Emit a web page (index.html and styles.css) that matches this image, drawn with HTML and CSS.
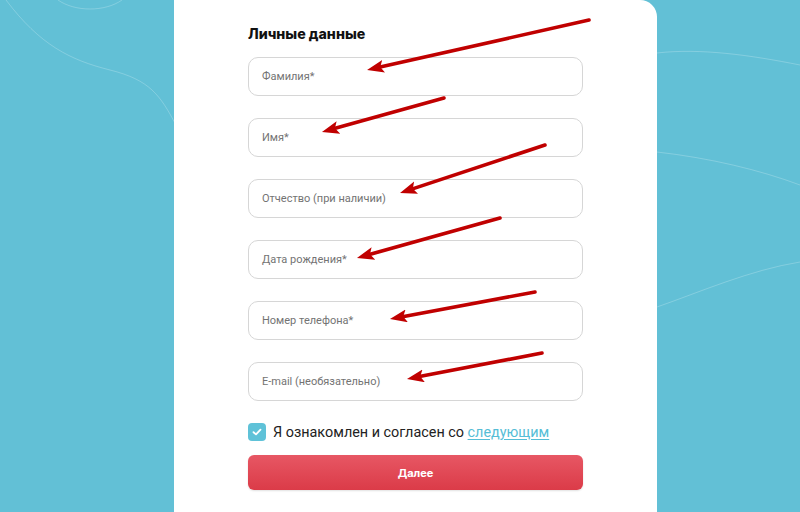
FILE: index.html
```html
<!DOCTYPE html>
<html lang="ru">
<head>
<meta charset="utf-8">
<title>Личные данные</title>
<link rel="stylesheet" href="styles.css">
</head>
<body>
<svg class="bg-lines" width="800" height="512" viewBox="0 0 800 512">
  <path d="M6 0 C 40 45, 70 60, 110 70 S 160 95, 176 125" />
  <path d="M58 0 C 75 12, 105 12, 122 0" />
  <path d="M657 53 C 700 48, 750 55, 800 65" />
  <path d="M657 152 C 710 158, 760 170, 800 185" />
  <path d="M657 307 C 700 292, 750 270, 800 262" />
</svg>
<main class="page">
  <section class="card">
    <h2 class="title">Личные данные</h2>
    <form class="form">
      <div class="field">Фамилия*</div>
      <div class="field">Имя*</div>
      <div class="field">Отчество (при наличии)</div>
      <div class="field">Дата рождения*</div>
      <div class="field">Номер телефона*</div>
      <div class="field">E-mail (необязательно)</div>
      <label class="agree">
        <span class="check"><svg width="10" height="8" viewBox="0 0 10 8"><path d="M1.5 4.2 L4 6.4 L8.5 1.6" /></svg></span>
        <span>Я ознакомлен и согласен со <a class="link" href="#">следующим</a></span>
      </label>
      <div class="btn">Далее</div>
    </form>
  </section>
</main>
<svg class="arrows" width="800" height="512" viewBox="0 0 800 512">
  <defs>
    <marker id="ah" markerUnits="userSpaceOnUse" markerWidth="20" markerHeight="14" refX="7" refY="6.5" orient="auto">
      <path d="M17 6.5 L0 0 L3.5 6.5 L0 13 Z" fill="#c00000"/>
    </marker>
  </defs>
  <line x1="589" y1="20" x2="376.8" y2="67.8" marker-end="url(#ah)"/>
  <line x1="444" y1="98" x2="331.6" y2="129.3" marker-end="url(#ah)"/>
  <line x1="545" y1="145" x2="409.5" y2="189.9" marker-end="url(#ah)"/>
  <line x1="500" y1="218" x2="366.6" y2="255.3" marker-end="url(#ah)"/>
  <line x1="535" y1="292" x2="399.8" y2="317.2" marker-end="url(#ah)"/>
  <line x1="542" y1="353" x2="416.8" y2="377.1" marker-end="url(#ah)"/>
</svg>
</body>
</html>
```
FILE: styles.css
```css
html, body {
  margin: 0;
  padding: 0;
  height: 512px;
  overflow: hidden;
}
body {
  background: #62c0d6;
  font-family: Roboto, "Liberation Sans", Arial, sans-serif;
  position: relative;
}
.bg-lines {
  position: absolute;
  left: 0;
  top: 0;
  z-index: 0;
}
.bg-lines path {
  fill: none;
  stroke: rgba(255, 255, 255, 0.22);
  stroke-width: 1;
}
.page {
  position: relative;
  z-index: 1;
  display: flex;
  height: 512px;
}
.card {
  margin-left: 174px;
  width: 483px;
  box-sizing: border-box;
  background: #ffffff;
  border-top-right-radius: 17px;
  padding: 24px 74px 0 74px;
  height: 512px;
}
.title {
  margin: 0 0 14px 0;
  font-family: Inter, "Noto Sans", sans-serif;
  font-weight: 800;
  font-size: 14.2px;
  line-height: 19px;
  color: #111111;
}
.form {
  display: flex;
  flex-direction: column;
}
.field {
  box-sizing: border-box;
  height: 39px;
  margin-bottom: 22px;
  border: 1.5px solid #d6d6d6;
  border-radius: 10px;
  padding-left: 13px;
  display: flex;
  align-items: center;
  font-size: 11px;
  color: #737373;
}
.field:nth-of-type(6) {
  margin-bottom: 21px;
}
.agree {
  display: flex;
  align-items: center;
  gap: 7px;
  font-size: 14.4px;
  color: #222222;
  height: 20px;
  margin-bottom: 13px;
}
.check {
  width: 18px;
  height: 18px;
  border-radius: 4px;
  background: #5fc2d8;
  display: flex;
  align-items: center;
  justify-content: center;
}
.check path {
  fill: none;
  stroke: #ffffff;
  stroke-width: 1.8;
  stroke-linecap: round;
  stroke-linejoin: round;
}
.link {
  color: #55bdd6;
  text-decoration: underline;
  text-underline-offset: 2px;
}
.btn {
  height: 35px;
  border-radius: 6px;
  background: linear-gradient(#e75764, #db3b48);
  color: #ffffff;
  font-family: Inter, "Noto Sans", sans-serif;
  font-weight: 700;
  font-size: 11px;
  display: flex;
  align-items: center;
  justify-content: center;
  box-shadow: 0 1px 2px rgba(0,0,0,0.12);
}
.arrows {
  position: absolute;
  left: 0;
  top: 0;
  z-index: 2;
  pointer-events: none;
}
.arrows line {
  stroke: #c00000;
  stroke-width: 3.6;
  stroke-linecap: round;
}
```
